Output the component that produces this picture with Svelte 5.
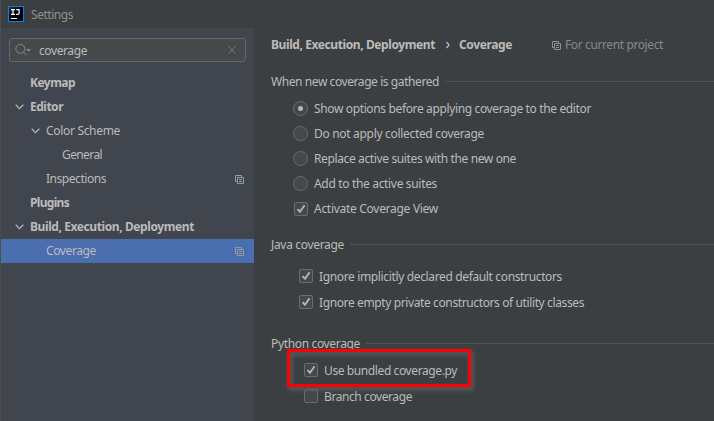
<script>
  const tree = [
    { label: 'Keymap', w: 45, depth: 0, bold: true },
    { label: 'Editor', w: 33, depth: 0, bold: true, open: true },
    { label: 'Color Scheme', w: 74, depth: 1, open: true },
    { label: 'General', w: 40, depth: 2 },
    { label: 'Inspections', w: 60, depth: 1, project: true },
    { label: 'Plugins', w: 39, depth: 0, bold: true },
    { label: 'Build, Execution, Deployment', w: 164, depth: 0, bold: true, open: true },
    { label: 'Coverage', w: 50, depth: 1, project: true, selected: true }
  ];
  const radios = [
    { label: 'Show options before applying coverage to the editor', w: 277, on: true },
    { label: 'Do not apply collected coverage', w: 170 },
    { label: 'Replace active suites with the new one', w: 202 },
    { label: 'Add to the active suites', w: 123 }
  ];

  // Tracks the label so that it occupies its designed width.
  function fit(node, width) {
    const natural = node.getBoundingClientRect().width;
    node.style.letterSpacing = `${(width - natural) / node.textContent.length}px`;
  }
</script>

{#snippet copyIcon()}
  <svg class="copy" width="9" height="9" viewBox="0 0 9 9" fill="none" stroke="currentColor">
    <path d="M2.5 6.5h-2v-6h6v2M2.5 2.5h6v6h-6zM4 4.5h3M4 6.5h3" />
  </svg>
{/snippet}

{#snippet check(label, w, on)}
  <div class="option">
    <span class="box">
      {#if on}
        <svg width="12" height="12" viewBox="0 0 12 12" fill="none" stroke="#b4b6b7" stroke-width="1.9">
          <path d="M2.5 6.1 5 8.7 9.6 2.2" />
        </svg>
      {/if}
    </span>
    <span class="text" use:fit={w}>{label}</span>
  </div>
{/snippet}

{#snippet heading(label, w)}
  <div class="heading"><span class="text" use:fit={w}>{label}</span><i></i></div>
{/snippet}

<div class="window">
  <header>
    <svg width="16" height="16" viewBox="0 0 16 16">
      <defs><linearGradient id="logo" x2="1" y2="1"><stop stop-color="#383838" /><stop offset=".5" stop-color="#000" /></linearGradient></defs>
      <rect x=".5" y=".5" width="15" height="15" fill="url(#logo)" stroke="#087cfa" />
      <path d="M3 3.6h4M5 3.6v4.8M3 8.4h4M8.3 3.6h2.8v3.6q0 1.2-1.3 1.2H8.2" fill="none" stroke="#fff" stroke-width="1.2" />
      <path d="M3 12.5h6" stroke="#fff" />
    </svg>
    <span class="text" use:fit={42}>Settings</span>
  </header>
  <div class="body">
    <aside>
      <div class="search">
        <svg width="17" height="14" viewBox="0 0 17 14" fill="none" stroke="#85888a">
          <circle cx="5.3" cy="5.8" r="4.5" /><path d="m8.6 9.1 3.2 3.2" />
          <path d="M11 6h5l-2.5 2.8z" fill="#85888a" stroke="none" />
        </svg>
        <span class="text query" use:fit={48}>coverage</span>
        <svg class="clear" width="8" height="8" viewBox="0 0 8 8" stroke="#73777a"><path d="m.5.5 7 7m0-7-7 7" /></svg>
      </div>
      <nav>
        {#each tree as row}
          <div class="row depth{row.depth}" class:bold={row.bold} class:selected={row.selected}>
            <span class="arrow">
              {#if row.open}
                <svg width="9" height="6" viewBox="0 0 9 6" fill="none" stroke="#aeb2b6" stroke-width="1.3"><path d="m.7.8 3.8 3.8L8.3.8" /></svg>
              {/if}
            </span>
            <span class="text" use:fit={row.w}>{row.label}</span>
            {#if row.project}{@render copyIcon()}{/if}
          </div>
        {/each}
      </nav>
    </aside>
    <main>
      <div class="crumbs">
        <b class="text" use:fit={164}>Build, Execution, Deployment</b>
        <svg width="4" height="8" viewBox="0 0 4 8" fill="none" stroke="#bbb" stroke-width="1.2"><path d="m.5 1 2.6 3L.5 7" /></svg>
        <b class="text" use:fit={53}>Coverage</b>
        <span class="project">{@render copyIcon()}<span class="text" use:fit={98}>For current project</span></span>
      </div>
      <section class="gathered">
        {@render heading('When new coverage is gathered', 168)}
        {#each radios as r}
          <div class="option">
            <span class="radio" class:on={r.on}></span>
            <span class="text" use:fit={r.w}>{r.label}</span>
          </div>
        {/each}
        {@render check('Activate Coverage View', 124, true)}
      </section>
      <section class="java">
        {@render heading('Java coverage', 73)}
        {@render check('Ignore implicitly declared default constructors', 243, true)}
        {@render check('Ignore empty private constructors of utility classes', 265, true)}
      </section>
      <section class="python">
        {@render heading('Python coverage', 89)}
        {@render check('Use bundled coverage.py', 133, true)}
        {@render check('Branch coverage', 88, false)}
        <div class="highlight"></div>
      </section>
    </main>
  </div>
</div>

<style>
  :global(body) { margin: 0; background: #3c3f41; }
  .window {
    box-sizing: border-box; width: 714px; height: 421px; overflow: hidden;
    display: flex; flex-direction: column;
    border-left: 1px solid #4b4d4e; background: #3c3f41; color: #bbb;
    font: 12px/16px "Noto Sans", "Open Sans", sans-serif;
  }
  svg { display: block; flex: none; }
  .text { display: inline-block; white-space: nowrap; flex: none; }
  header .text, .query, .option .text { padding-top: 2px; }
  header { height: 28px; display: flex; align-items: center; gap: 7px; padding-left: 7px; color: #8d8f90; }
  .body { flex: 1; display: flex; min-height: 0; }
  aside { width: 253px; background: #41454e; flex: none; }
  .search {
    box-sizing: border-box; height: 24px; width: 237px; margin: 10px 0 9px 8px;
    display: flex; align-items: center; padding-left: 5px;
    border: 1px solid #646769; border-radius: 3px; background: #45494a;
  }
  .query { margin-left: 7px; }
  .clear { margin-left: auto; margin-right: 9px; }
  .row { height: 24px; display: flex; align-items: center; padding-right: 10px; }
  .depth0 { padding-left: 13px; }
  .depth1 { padding-left: 29px; }
  .depth2 { padding-left: 45px; }
  .arrow { width: 16px; flex: none; padding-left: 1px; box-sizing: border-box; }
  .bold { font-weight: 700; }
  .selected { background: #4b6eaf; }
  .row .copy { margin-left: auto; color: #929ba4; }
  main { flex: 1; padding-left: 17px; min-width: 0; }
  .crumbs { height: 34px; display: flex; align-items: center; }
  .crumbs svg { margin: 0 9px 0 11px; }
  .crumbs .project { display: flex; align-items: center; margin-left: 40px; color: #87898a; }
  .crumbs .project .copy { margin: 0 4px 0 0; color: #87939a; }
  .heading { display: flex; align-items: center; height: 16px; gap: 6px; }
  .heading i { height: 1px; flex: 1; margin-bottom: 1px; background: #515456; }
  .option { display: flex; align-items: center; }
  .box, .radio { box-sizing: border-box; flex: none; border: 1px solid #6b6d6e; background: #43494a; }
  .box { width: 14px; height: 14px; border-radius: 2px; margin-right: 6px; }
  .radio { width: 15px; height: 15px; border-radius: 50%; margin-right: 6px; display: flex; align-items: center; justify-content: center; }
  .on::after { content: ""; width: 5px; height: 5px; border-radius: 50%; background: #b4b6b7; }
  .gathered { padding-top: 12px; }
  .gathered .option { height: 25px; padding-left: 22px; }
  .gathered .option .text { padding-top: 1px; }
  .gathered .heading { margin-bottom: 6px; }
  .gathered .box { margin-left: 1px; }
  .java { padding-top: 16px; }
  .java .option { height: 26px; padding-left: 28px; }
  .java .heading { margin-bottom: 10px; }
  .python { padding-top: 21px; position: relative; }
  .python .option { height: 26px; padding-left: 33px; }
  .python .heading { margin-bottom: 5px; }
  .highlight {
    position: absolute; left: 16px; top: 34px; box-sizing: border-box; width: 184px; height: 38px;
    border: 3px solid #f00; filter: drop-shadow(2px 3px 2px #626566);
  }
</style>
